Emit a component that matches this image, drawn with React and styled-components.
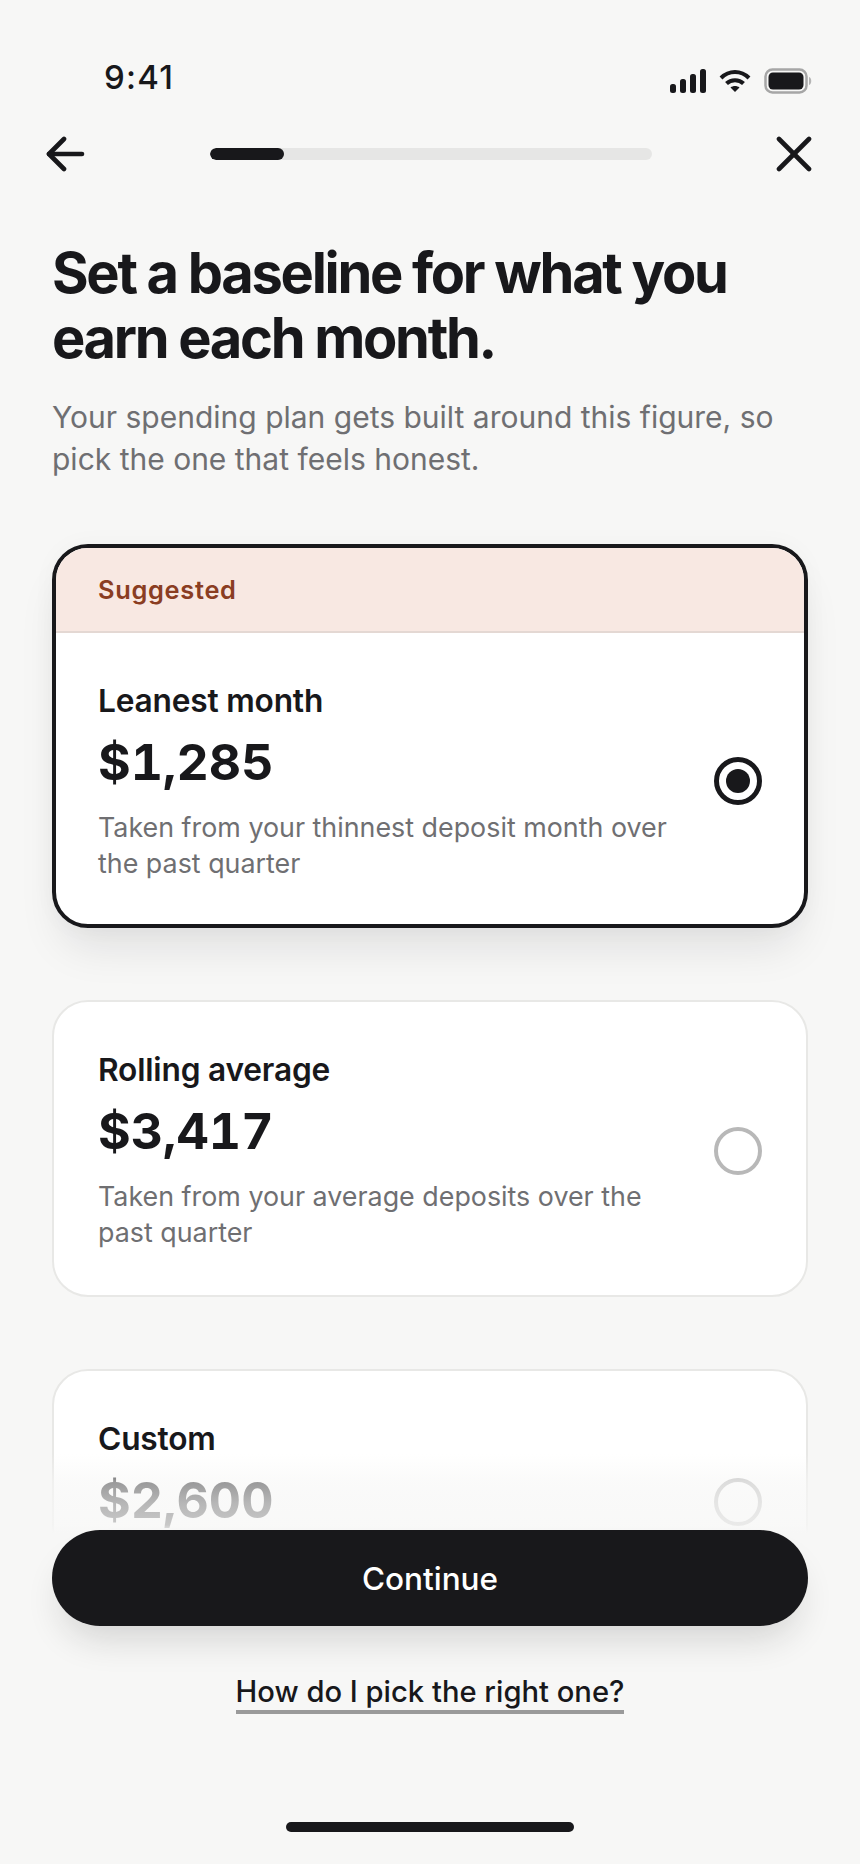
import styled, { createGlobalStyle } from "styled-components";

const GlobalStyle = createGlobalStyle`
    html, body {
        margin: 0;
        padding: 0;
        background: #f7f7f6;
    }

    * {
        box-sizing: border-box;
    }
`;

const Page = styled.div`
    position: relative;
    width: 860px;
    height: 1864px;
    overflow: hidden;
    background: #f7f7f6;
    color: #18181b;
    font-family: Inter, "Liberation Sans", sans-serif;
`;

const StatusBar = styled.div`
    display: flex;
    justify-content: space-between;
    align-items: flex-start;
    height: 132px;
    padding: 57px 47px 0 104px;
`;

const Time = styled.span`
    font-size: 33px;
    line-height: 40px;
    font-weight: 500;
    letter-spacing: 1.2px;
`;

const StatusIcons = styled.div`
    display: flex;
    align-items: center;
    gap: 13px;
    padding-top: 11px;
`;

const NavBar = styled.div`
    display: flex;
    align-items: center;
    justify-content: space-between;
    height: 44px;
    padding: 0 48px 0 46px;
`;

const Progress = styled.div`
    width: 442px;
    height: 12px;
    border-radius: 6px;
    background: #e6e6e5;
    overflow: hidden;
`;

const ProgressFill = styled.div`
    width: 74px;
    height: 100%;
    border-radius: 6px;
    background: #18181b;
`;

const Content = styled.div`
    padding: 65px 52px 0;
`;

const Title = styled.h1`
    margin: 0;
    font-size: 56px;
    line-height: 65px;
    font-weight: 700;
    letter-spacing: -2.3px;
`;

const Subtitle = styled.p`
    margin: 25px 0 0;
    font-size: 30px;
    line-height: 42px;
    font-weight: 400;
    color: #6f6f72;
`;

const Options = styled.div`
    display: flex;
    flex-direction: column;
    gap: 72px;
    margin-top: 64px;
`;

const CardShadow = styled.div`
    border-radius: 36px;
    box-shadow: ${(p) => (p.$selected ? "0 28px 44px -10px rgba(24, 24, 27, 0.1), 0 0 24px rgba(24, 24, 27, 0.03)" : "none")};
`;

const Card = styled.div`
    border-radius: 36px;
    background: #fff;
    overflow: hidden;
    border: ${(p) => (p.$selected ? "4px solid #18181b" : "2px solid #e8e8e6")};
`;

const CardBanner = styled.div`
    height: 85px;
    padding: 0 42px;
    display: flex;
    align-items: center;
    background: #f8e8e2;
    border-bottom: 2px solid #e4d8d3;
    color: #8a3d22;
    font-size: 25.4px;
    font-weight: 600;
    letter-spacing: 0.7px;
`;

const CardBody = styled.div`
    display: flex;
    align-items: flex-start;
    justify-content: space-between;
    min-height: 258px;
    padding: 49px ${(p) => (p.$selected ? "42px" : "44px")} ${(p) => (p.$selected ? "43px" : "45px")} ${(p) => (p.$selected ? "42px" : "44px")};
`;

const CardText = styled.div`
    width: 580px;
`;

const OptionName = styled.div`
    font-size: 31.7px;
    line-height: 38px;
    font-weight: 600;
    letter-spacing: -0.2px;
`;

const Amount = styled.div`
    margin-top: 11px;
    font-size: 50px;
    line-height: 62px;
    font-weight: 700;
    font-variant-numeric: tabular-nums;
`;

const Description = styled.div`
    margin-top: 16px;
    font-size: 26.85px;
    line-height: 36px;
    color: #6f6f72;
`;

const Radio = styled.div`
    flex: none;
    align-self: center;
    display: flex;
    align-items: center;
    justify-content: center;
    width: 48px;
    height: 48px;
    margin-top: ${(p) => (p.$selected ? "-2px" : "0")};
    border-radius: 50%;
    border: ${(p) => (p.$selected ? "5px solid #18181b" : "4px solid #b8b8b8")};

    &::after {
        content: "";
        display: ${(p) => (p.$selected ? "block" : "none")};
        width: 24px;
        height: 24px;
        border-radius: 50%;
        background: #18181b;
    }
`;

const BottomDock = styled.div`
    position: absolute;
    left: 0;
    right: 0;
    bottom: 0;
    height: 410px;
    padding: 0 52px;
    display: flex;
    flex-direction: column;
    align-items: center;
    justify-content: flex-end;
    background: linear-gradient(
        to bottom,
        rgba(247, 247, 246, 0) 0,
        rgba(247, 247, 246, 0.58) 28px,
        rgba(247, 247, 246, 0.71) 49px,
        rgba(247, 247, 246, 0.79) 71px,
        #f7f7f6 79px
    );
`;

const ContinueButton = styled.button`
    width: 100%;
    height: 96px;
    border: 0;
    border-radius: 48px;
    background: #18181b;
    color: #fff;
    font-family: inherit;
    font-size: 31.5px;
    font-weight: 500;
    box-shadow: 0 22px 36px -10px rgba(24, 24, 27, 0.16);
`;

const HelpLink = styled.a`
    margin-top: 47px;
    font-size: 29.2px;
    line-height: 37px;
    font-weight: 500;
    color: #18181b;
    border-bottom: 4px solid #9a9a9a;
`;

const HomeIndicator = styled.div`
    width: 288px;
    height: 10px;
    margin: 108px 0 32px;
    border-radius: 5px;
    background: #18181b;
`;

function SignalIcon() {
    return (
        <svg width="36" height="24" viewBox="0 0 36 24" fill="#18181b">
            <rect x="0" y="15" width="6" height="9" rx="2.5" />
            <rect x="10" y="10" width="6" height="14" rx="2.5" />
            <rect x="20" y="5" width="6" height="19" rx="2.5" />
            <rect x="30" y="0" width="6" height="24" rx="2.5" />
        </svg>
    );
}

function WifiIcon() {
    return (
        <svg width="32" height="24" viewBox="0 0 32 24" fill="none" stroke="#18181b" strokeWidth="4">
            <path d="M2 9 C10 1 22 1 30 9" />
            <path d="M7.5 14.5 C12 10 20 10 24.5 14.5" />
            <path d="M16 23 L11.5 18.5 C14 16.5 18 16.5 20.5 18.5 Z" fill="#18181b" stroke="none" />
        </svg>
    );
}

function BatteryIcon() {
    return (
        <svg width="49" height="26" viewBox="0 0 49 26">
            <rect x="1.5" y="1.5" width="41" height="23" rx="7" fill="none" stroke="#a6a6a6" strokeWidth="2.5" />
            <rect x="4.5" y="4.5" width="35" height="17" rx="4.5" fill="#18181b" />
            <path d="M45 9 C48 10 48 16 45 17 Z" fill="#b5b5b5" />
        </svg>
    );
}

function BackIcon() {
    return (
        <svg width="40" height="36" viewBox="0 0 40 36" fill="none" stroke="#18181b" strokeWidth="4.6" strokeLinecap="round" strokeLinejoin="round">
            <path d="M36 18 H3" />
            <path d="M18 3 L3 18 L18 33" />
        </svg>
    );
}

function CloseIcon() {
    return (
        <svg width="36" height="36" viewBox="0 0 36 36" fill="none" stroke="#18181b" strokeWidth="4.6" strokeLinecap="round">
            <path d="M3 3 L33 33" />
            <path d="M33 3 L3 33" />
        </svg>
    );
}

const options = [
    {
        name: "Leanest month",
        amount: "$1,285",
        description: "Taken from your thinnest deposit month over the past quarter",
        banner: "Suggested",
        selected: true,
    },
    {
        name: "Rolling average",
        amount: "$3,417",
        description: "Taken from your average deposits over the past quarter",
    },
    {
        name: "Custom",
        amount: "$2,600",
    },
];

function App() {
    return (
        <Page>
            <GlobalStyle />

            <StatusBar>
                <Time>9:41</Time>
                <StatusIcons>
                    <SignalIcon />
                    <WifiIcon />
                    <BatteryIcon />
                </StatusIcons>
            </StatusBar>

            <NavBar>
                <BackIcon />
                <Progress>
                    <ProgressFill />
                </Progress>
                <CloseIcon />
            </NavBar>

            <Content>
                <Title>Set a baseline for what you earn each month.</Title>
                <Subtitle>Your spending plan gets built around this figure, so pick the one that feels honest.</Subtitle>

                <Options>
                    {options.map((option) => (
                        <CardShadow key={option.name} $selected={option.selected}>
                            <Card $selected={option.selected}>
                                {option.banner && <CardBanner>{option.banner}</CardBanner>}
                                <CardBody $selected={option.selected}>
                                    <CardText>
                                        <OptionName>{option.name}</OptionName>
                                        <Amount>{option.amount}</Amount>
                                        {option.description && <Description>{option.description}</Description>}
                                    </CardText>
                                    <Radio $selected={option.selected} />
                                </CardBody>
                            </Card>
                        </CardShadow>
                    ))}
                </Options>
            </Content>

            <BottomDock>
                <ContinueButton>Continue</ContinueButton>
                <HelpLink>How do I pick the right one?</HelpLink>
                <HomeIndicator />
            </BottomDock>
        </Page>
    );
}

export default App;
